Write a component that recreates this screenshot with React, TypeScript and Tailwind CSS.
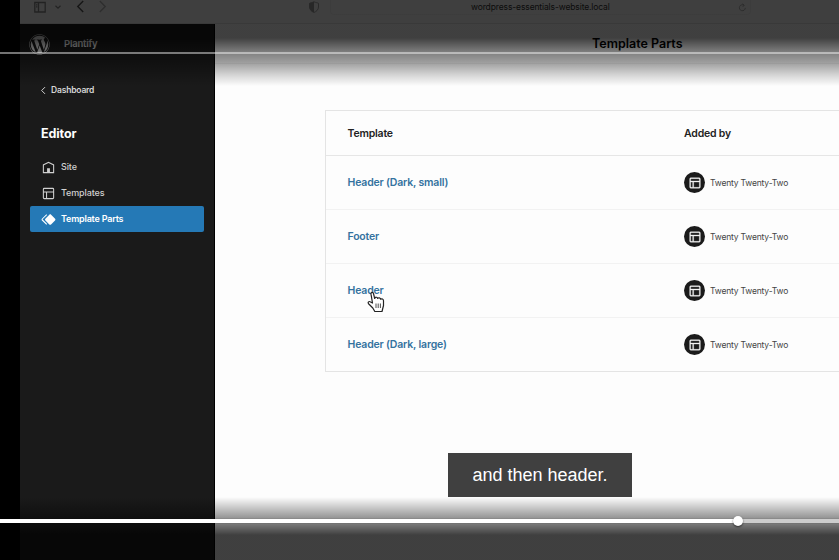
import React from "react";
import { FaWordpress } from "react-icons/fa";

const LAYOUT =
  "M18 5.5H6a.5.5 0 00-.5.5v3h13V6a.5.5 0 00-.5-.5zm.5 5H10v8h8a.5.5 0 00.5-.5v-7.5zm-10 0h-3V18a.5.5 0 00.5.5h2.5v-8zM6 4h12a2 2 0 012 2v12a2 2 0 01-2 2H6a2 2 0 01-2-2V6a2 2 0 012-2z";
const HOME = "M12 4L4 7.9V20h16V7.9L12 4zm6.5 14.5H14V13h-4v5.5H5.5V8.8L12 5.7l6.5 3.1v9.7z";
const SYMBOL =
  "M21.3 10.8l-5.6-5.6c-.7-.7-1.8-.7-2.5 0l-5.6 5.6c-.7.7-.7 1.8 0 2.5l5.6 5.6c.3.3.8.5 1.2.5s.9-.2 1.2-.5l5.6-5.6c.8-.7.8-1.9.1-2.5zm-17.6 1L10 5.5l-1-1-6.3 6.3c-.7.7-.7 1.8 0 2.5L9 19.5l1.1-1.1-6.3-6.3c-.2 0-.2-.2-.1-.3z";

const Icon = ({ d, className }: { d: string; className: string }) => (
  <svg viewBox="0 0 24 24" fill="currentColor" className={className}>
    <path d={d} />
  </svg>
);

const Stroke = ({ d, className }: { d: string; className: string }) => (
  <svg viewBox="0 0 12 12" fill="none" stroke="currentColor" strokeWidth="1.3" className={className}>
    <path d={d} />
  </svg>
);

function BrowserBar() {
  return (
    <div className="flex h-6 shrink-0 items-start border-b border-[#e4e4e4] bg-[#fbfbfb] pl-[13px] text-[#888]">
      <Stroke d="M.8 1.500h10.400v9.500H.8zM4.500 1.500v9.500M2 3.800h1.400M2 5.800h1.400" className="mt-px h-3 w-[14px]" />
      <svg viewBox="0 0 12 12" fill="none" stroke="currentColor" strokeWidth="2.4" className="ml-[8px] mt-[4px] h-[6px] w-[6px]">
        <path d="M1 3.500l5 5 5-5" />
      </svg>
      <Stroke d="M8.500 1L3.500 6l5 5" className="ml-[13px] h-[13px] w-[13px] text-[#555]" />
      <Stroke d="M3.500 1l5 5-5 5" className="ml-[9px] h-[13px] w-[13px] text-[#b4b4b4]" />
      <svg viewBox="0 0 12 12" className="ml-[199px] mt-[1px] h-3 w-3 text-[#9a9a9a]">
        <path d="M6 .8C8 1.800 10 1.800 10.500 2.300V6C10.500 8.800 8 10.800 6 11.400 4 10.800 1.500 8.800 1.500 6V2.300C2 1.800 4 1.800 6 .8z" fill="none" stroke="currentColor" strokeWidth=".9" />
        <path d="M6 .8v10.600C4 10.800 1.500 8.800 1.500 6V2.300C2 1.800 4 1.800 6 .8z" fill="currentColor" />
      </svg>
      <div className="ml-[10px] flex h-[15px] w-[421px] items-center rounded-b border border-t-0 border-[#f0f0f0] pl-[140px] text-[#333]">
        <span className="w-[267px] whitespace-nowrap text-[8.5px] leading-none tracking-[-0.12px]">
          wordpress-essentials-website.local
        </span>
        <svg viewBox="0 0 12 12" className="h-[9px] w-[9px] shrink-0 text-[#999]" fill="none" stroke="currentColor">
          <path d="M9.800 6.500A4 4 0 1 1 8 3M6 1l2.300 2-2 2.200" />
        </svg>
      </div>
    </div>
  );
}

function NavItem({ d, label, active }: { d: string; label: string; active?: boolean }) {
  return (
    <div
      className={
        "flex h-[26px] items-center rounded-[2px] pl-[9.5px] text-[9px] " +
        (active ? "bg-[#2579b6] font-semibold tracking-[-0.2px] text-white" : "font-medium tracking-[-0.12px] text-[#d0d0d0]")
      }
    >
      <Icon d={d} className="h-[17px] w-[17px]" />
      <span className="ml-[4.5px] whitespace-nowrap">{label}</span>
    </div>
  );
}

function Sidebar() {
  return (
    <aside className="flex w-[195px] shrink-0 flex-col border-r border-black bg-[#1a1a1a] pl-[10px] pr-[10px]">
      <div className="flex h-[39px] items-center text-[#e6e6e6]">
        <FaWordpress className="ml-[-1px] mt-px h-[21px] w-[21px]" />
        <span className="ml-[14px] mt-[2px] text-[9.5px] font-semibold tracking-[-0.2px]">Plantify</span>
      </div>
      <div className="mt-[20px] flex h-[14px] items-center pl-[8.5px] text-[8.5px] font-semibold text-[#d6d6d6]">
        <Stroke d="M8 1.500L3.500 6 8 10.500" className="h-[9px] w-[9px]" />
        <span className="ml-[3.5px] mt-px tracking-[-0.18px]">Dashboard</span>
      </div>
      <h2 className="mt-[27px] pl-[11px] text-[12.5px] font-bold leading-5 tracking-[-0.08px] text-white">Editor</h2>
      <nav className="mt-[10px]">
        <NavItem d={HOME} label="Site" />
        <NavItem d={LAYOUT} label="Templates" />
        <NavItem d={SYMBOL} label="Template Parts" active />
      </nav>
    </aside>
  );
}

const parts = ["Header (Dark, small)", "Footer", "Header", "Header (Dark, large)"];

function Table() {
  return (
    <div className="ml-[110px] mt-[46px] border border-r-0 border-[#e4e4e4]">
      <div className="flex h-[45px] items-center border-b border-[#e6e6e6] pl-[21.5px] pt-px text-[10.5px] font-semibold tracking-[-0.2px] text-[#222]">
        <span className="w-[336.5px]">Template</span>
        <span>Added by</span>
      </div>
      {parts.map((name) => (
        <div key={name} className="flex h-[54px] items-center border-b border-[#f2f2f2] pl-[21.5px] last:h-[53px] last:border-b-0">
          <span className="w-[336.5px] text-[10.5px] font-semibold tracking-[-0.18px] text-[#34729f]">{name}</span>
          <span className="flex h-[21px] w-[21px] items-center justify-center rounded-full bg-[#1b1b1b] text-[#f4f4f4]">
            <Icon d={LAYOUT} className="h-4 w-4 stroke-current stroke-[.5]" />
          </span>
          <span className="ml-[5px] mt-[2px] text-[8.5px] tracking-[-0.18px] text-[#444]">Twenty Twenty-Two</span>
        </div>
      ))}
    </div>
  );
}

function PlayerOverlay() {
  return (
    <>
      <div className="absolute inset-x-0 top-0 h-[86px] bg-[linear-gradient(to_bottom,rgba(0,0,0,.75)_0,rgba(0,0,0,.75)_38px,rgba(0,0,0,.5)_52px,rgba(0,0,0,.37)_63px,rgba(0,0,0,.16)_75px,transparent_86px)]" />
      <div className="absolute inset-x-0 top-[52px] h-[2px] bg-white/45" />
      <div className="absolute inset-x-0 bottom-0 h-[63px] bg-[linear-gradient(to_bottom,transparent_0,rgba(0,0,0,.41)_21px,rgba(0,0,0,.52)_27px,rgba(0,0,0,.75)_38px)]" />
      <div className="absolute inset-x-0 top-[519px] h-1 bg-[#ccc] shadow-[0_0_1px_rgba(0,0,0,.6)]">
        <div className="h-full w-[738px] bg-white" />
      </div>
      <div className="absolute left-[733px] top-[516px] h-[10px] w-[10px] rounded-full bg-white shadow-[0_1px_2px_rgba(0,0,0,.6)]" />
      <div className="absolute left-[448px] top-[453px] flex h-[44px] w-[184px] items-center justify-center bg-[#404040] font-['Liberation_Sans',sans-serif] text-[18px] text-white">
        and then header.
      </div>
    </>
  );
}

export default function App() {
  return (
    <div className="relative flex h-[560px] w-[839px] overflow-hidden bg-[#fdfdfd] font-['Inter',sans-serif]">
      <div className="w-5 shrink-0 bg-black" />
      <div className="flex min-w-0 flex-1 flex-col">
        <BrowserBar />
        <div className="flex flex-1">
          <Sidebar />
          <main className="min-w-0 flex-1">
            <header className="flex h-[40px] items-center border-b border-[#f2f2f2] pl-[377px] pt-px">
              <h1 className="whitespace-nowrap text-[12.5px] font-semibold text-black">Template Parts</h1>
            </header>
            <Table />
          </main>
        </div>
      </div>
      <svg viewBox="0 0 18 23" className="absolute left-[367px] top-[291px] h-[23px] w-[18px]" fill="white" stroke="#222" strokeWidth="1.2" strokeLinejoin="round">
        <path d="M5.500 12L4 3.200C3.700 1 6 .6 6.500 2.600L7.700 7.500C8.200 5.700 10.500 5.900 10.700 7.500 11.500 6.200 13.400 6.700 13.600 8.200 14.800 7.400 16.500 8 16.500 9.800V14.500L15 20.500H7.800L5.800 17 1.800 13C.3 11.200 2 9.800 3.600 11z" />
        <path d="M9 12.500v4.500M11.200 12.500v4.500M13.400 12.500v4.500" strokeWidth=".8" />
      </svg>
      <PlayerOverlay />
    </div>
  );
}
